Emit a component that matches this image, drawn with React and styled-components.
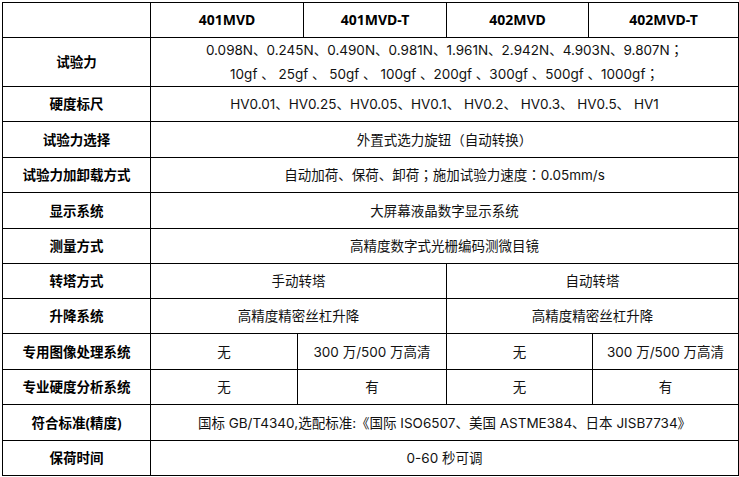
import React from "react";
import styled, { createGlobalStyle } from "styled-components";

const Global = createGlobalStyle`
  html, body { margin: 0; padding: 0; background: #fff; }
  body { font-family: Inter, "Noto Sans CJK SC", sans-serif; color: #111; }
`;

const Page = styled.div`
  padding: 2px 0 0 2px;
`;

const Table = styled.table`
  border-collapse: collapse;
  table-layout: fixed;
  width: 736px;
  border: 1px solid #000;
`;

const Row = styled.tr`
  height: ${(p) => p.$h}px;
`;

const Cell = styled.td`
  border: 1px solid #000;
  padding: 0;
  text-align: center;
  vertical-align: middle;
  font-size: 13.5px;
  line-height: 24px;
  white-space: pre;
  color: #111;
  overflow: hidden;
`;

const Label = styled(Cell)`
  font-family: "Noto Sans", "Noto Sans CJK SC", sans-serif;
  font-weight: 700;
  color: #000;
`;

const Head = styled(Cell)`
  font-family: "Noto Sans", "Noto Sans CJK SC", sans-serif;
  font-weight: 700;
  font-size: 14px;
  color: #000;
`;

/* centred full-width semicolon / colon, as in the source document */
const P = styled.span`
  font-family: "Noto Sans CJK TC", sans-serif;
  line-height: 1;
`;

const cols = [148, 147, 6, 143, 142, 4, 146];

const simpleRows = [
  ["硬度标尺", "HV0.01、HV0.25、HV0.05、HV0.1、 HV0.2、 HV0.3、 HV0.5、 HV1", 35],
  ["试验力选择", "外置式选力旋钮（自动转换）", 36],
  [
    "试验力加卸载方式",
    <>
      自动加荷、保荷、卸荷<P>；</P>施加试验力速度<P>：</P>0.05mm/s
    </>,
    35,
  ],
  ["显示系统", "大屏幕液晶数字显示系统", 36],
  ["测量方式", "高精度数字式光栅编码测微目镜", 35],
];

export default function App() {
  return (
    <Page>
      <Global />
      <Table>
        <colgroup>
          {cols.map((w, i) => (
            <col key={i} style={{ width: w }} />
          ))}
        </colgroup>
        <tbody>
          <Row $h={35}>
            <Head />
            <Head colSpan={2}>401MVD</Head>
            <Head>401MVD-T</Head>
            <Head>402MVD</Head>
            <Head colSpan={2}>402MVD-T</Head>
          </Row>
          <Row $h={49}>
            <Label>试验力</Label>
            <Cell colSpan={6}>
              0.098N、0.245N、0.490N、0.981N、1.961N、2.942N、4.903N、9.807N<P>；</P>
              {"\n"}
              {"10gf 、 25gf 、 50gf 、 100gf 、200gf 、300gf 、500gf 、1000gf"}
              <P>；</P>
            </Cell>
          </Row>
          {simpleRows.map(([l, v, h]) => (
            <Row $h={h} key={l}>
              <Label>{l}</Label>
              <Cell colSpan={6}>{v}</Cell>
            </Row>
          ))}
          <Row $h={35}>
            <Label>转塔方式</Label>
            <Cell colSpan={3}>手动转塔</Cell>
            <Cell colSpan={3}>自动转塔</Cell>
          </Row>
          <Row $h={35}>
            <Label>升降系统</Label>
            <Cell colSpan={3}>高精度精密丝杠升降</Cell>
            <Cell colSpan={3}>高精度精密丝杠升降</Cell>
          </Row>
          <Row $h={36}>
            <Label>专用图像处理系统</Label>
            <Cell>无</Cell>
            <Cell colSpan={2}>300 万/500 万高清</Cell>
            <Cell colSpan={2}>无</Cell>
            <Cell>300 万/500 万高清</Cell>
          </Row>
          <Row $h={35}>
            <Label>专业硬度分析系统</Label>
            <Cell>无</Cell>
            <Cell colSpan={2}>有</Cell>
            <Cell colSpan={2}>无</Cell>
            <Cell>有</Cell>
          </Row>
          <Row $h={36}>
            <Label>符合标准(精度)</Label>
            <Cell colSpan={6}>
              国标 GB/T4340,选配标准:《国际 ISO6507、美国 ASTME384、日本 JISB7734》
            </Cell>
          </Row>
          <Row $h={35}>
            <Label>保荷时间</Label>
            <Cell colSpan={6}>0-60 秒可调</Cell>
          </Row>
        </tbody>
      </Table>
    </Page>
  );
}
